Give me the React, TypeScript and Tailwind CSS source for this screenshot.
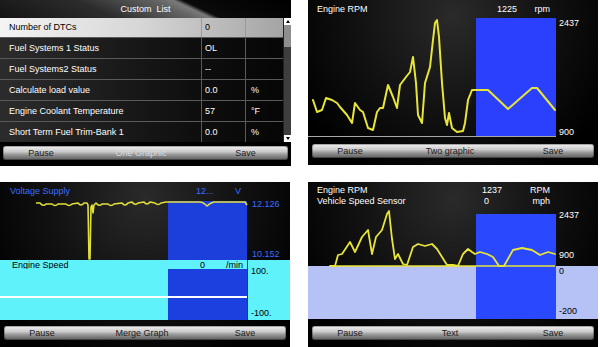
import React from 'react';

const font = "font-['Liberation_Sans',Arial,sans-serif]";

function Btn({ labels, dim }: { labels: string[]; dim?: boolean }) {
  return (
    <div className="grid h-[14px] grid-cols-[76px_124px_1fr] items-center rounded-[3px] bg-[linear-gradient(to_bottom,#f2f2f2,#cacaca_40%,#979797_62%,#5c5c5c)] text-[9px] leading-[11px] text-[#1b1b1b] shadow-[inset_0_0_0_1px_rgba(0,0,0,0.3)]">
      <span className="text-center">{labels[0]}</span>
      <span className={dim ? 'text-center text-[#d9d9d9]' : 'text-center'}>{labels[1]}</span>
      <span className="text-center">{labels[2]}</span>
    </div>
  );
}

const rows = [
  ['Number of DTCs', '0', ''],
  ['Fuel Systems 1 Status', 'OL', ''],
  ['Fuel Systems2 Status', '--', ''],
  ['Calculate load value', '0.0', '%'],
  ['Engine Coolant Temperature', '57', '°F'],
  ['Short Term Fuel Trim-Bank 1', '0.0', '%'],
];

function CustomList() {
  return (
    <div className="flex h-[166px] w-[291px] flex-col bg-black text-white">
      <div className="flex h-[18px] items-center justify-center whitespace-pre bg-[linear-gradient(25deg,#141414_0%,#2c2c2c_35%,#626262_58%,#7a7a7a_64%,#0a0a0a_67%,#000_100%)]">
        Custom  List
      </div>
      <div className="flex">
        <div className="w-[283px]">
          {rows.map((r, i) => (
            <div
              key={r[0]}
              className={
                i === 0
                  ? 'grid h-[19px] grid-cols-[201px_44px_1fr] items-center bg-[linear-gradient(to_right,#f4f4f4,#d6d6d6_50%,#a4a4a4)] text-black'
                  : 'grid h-[21px] grid-cols-[201px_44px_1fr] items-center border-t border-[#5a5a5a] bg-[linear-gradient(to_right,#2c2c2c,#0e0e0e_70%,#060606)]'
              }
            >
              <span className="pl-[9px]">{r[0]}</span>
              <span className={i === 0 ? 'flex h-full items-center border-l border-[#9a9a9a] pl-[3px]' : 'flex h-full items-center border-l border-[#5a5a5a] pl-[3px]'}>{r[1]}</span>
              <span className={i === 0 ? 'flex h-full items-center border-l border-[#9a9a9a] pl-[5px]' : 'flex h-full items-center border-l border-[#5a5a5a] pl-[5px]'}>{r[2]}</span>
            </div>
          ))}
        </div>
        <div className="flex w-[8px] flex-col border-l border-[#222] bg-[#3e3e3e]">
          <div className="flex h-[7px] items-center justify-center bg-white">
            <div className="border-x-[2px] border-b-[3px] border-x-transparent border-b-black" />
          </div>
          <div className="h-[22px] bg-[#8e8e8e]" />
          <div className="flex-1" />
          <div className="flex h-[7px] items-center justify-center bg-white">
            <div className="border-x-[2px] border-t-[3px] border-x-transparent border-t-black" />
          </div>
        </div>
      </div>
      <div className="flex-1 px-[3px] pt-[4px]">
        <Btn labels={['Pause', 'One Graphic', 'Save']} dim />
      </div>
    </div>
  );
}

const panelBg = 'bg-[radial-gradient(ellipse_at_50%_10%,#2a2a2a_0%,#121212_45%,#000_85%)]';

function TwoGraphic() {
  return (
    <div className={'flex h-[165px] w-[290px] flex-col text-white ' + panelBg}>
      <div className="flex h-[18px] items-center pl-[9px]">
        <span className="w-[180px]">Engine RPM</span>
        <span className="w-[37px]">1225</span>
        <span className="w-[16px] text-right">rpm</span>
      </div>
      <div className="flex h-[120px]">
        <svg width="248" height="120" viewBox="0 0 248 120" className="shrink-0">
          <rect x="168" y="0" width="80" height="119" fill="#2b40fc" />
          <line x1="0" y1="118.5" x2="248" y2="118.5" stroke="#a8a8a8" strokeWidth="1" />
          <polyline
            fill="none"
            stroke="#e8e537"
            strokeWidth="2"
            strokeLinejoin="round"
            strokeLinecap="round"
            points="5,82 9,94 14,92 18,80 24,82 29,85 32,89 39,97 44,105 47,85 52,92 55,94 60,110 65,112 69,94 72,90 75,90 80,67 85,79 89,90 92,67 98,59 102,54 105,39 108,65 110,97 114,105 117,65 122,49 125,22 127,5 129,2 131,19 134,65 137,100 139,107 141,95 144,110 149,114 155,113 157,105 160,82 164,72 180,72 200,91 224,70 229,70 247,92"
          />
        </svg>
        <div className="flex flex-1 flex-col justify-between pl-[3px]">
          <span>2437</span>
          <span>900</span>
        </div>
      </div>
      <div className="flex-1 px-[4px] pt-[6px]">
        <Btn labels={['Pause', 'Two graphic', 'Save']} />
      </div>
    </div>
  );
}

function MergeGraph() {
  return (
    <div className={'flex h-[165px] w-[290px] flex-col text-white ' + panelBg}>
      <div className="flex h-[17px] pl-[10px] pt-[4px] text-[#3c6cff]">
        <span className="w-[186px]">Voltage Supply</span>
        <span className="w-[39px]">12...</span>
        <span>V</span>
      </div>
      <div className="flex h-[61px]">
        <svg width="248" height="61" viewBox="0 0 248 61" className="shrink-0">
          <rect x="168" y="2" width="79" height="59" fill="#1c3fdc" />
          <path
            fill="none"
            stroke="#e2df3a"
            strokeWidth="1.6"
            strokeLinejoin="round"
            d="M36,4 L40,4 Q43,8 46,5 L52,5 Q55,8 58,5 L66,5 Q69,8 72,5 L78,4 Q81,8 84,4 L87,4 L88,6 L89,60 L90,60 L91,8 L92,6 L93,14 L94,6 L96,4 Q99,8 102,5 L108,5 Q111,8 114,5 L122,4 Q125,8 128,4 L132,3 Q135,7 138,4 L144,3 Q147,7 150,3 L155,4 Q158,7 161,4 L166,3 L200,3 Q203,3 207,7 Q210,4 214,3 L245,3 L247,6"
          />
        </svg>
        <div className="flex flex-1 flex-col justify-between pl-[4px] text-[#3c6cff]">
          <span>12.126</span>
          <span>10.152</span>
        </div>
      </div>
      <div className="flex h-[60px] bg-[#60f2fb] text-black">
        <div className="flex w-[247px] flex-col">
          <div className="flex h-[9px] pl-[12px]">
            <span className="w-[188px]">Engine Speed</span>
            <span className="w-[26px]">0</span>
            <span>/min</span>
          </div>
          <div className="h-[51px] bg-[linear-gradient(to_right,#60f2fb_168px,#1c3fe0_168px)] pt-[27px]">
            <div className="h-[2px] bg-white" />
          </div>
        </div>
        <div className="flex flex-1 flex-col border-l border-[#1a34b8] pl-[3px] pt-[6px]">
          <span>100.</span>
          <span className="mt-[31px]">-100.</span>
        </div>
      </div>
      <div className="flex-1 px-[4px] pt-[6px]">
        <Btn labels={['Pause', 'Merge Graph', 'Save']} />
      </div>
    </div>
  );
}

function TextGraph() {
  return (
    <div className={'flex h-[165px] w-[290px] flex-col text-white ' + panelBg}>
      <div className="flex h-[28px] pl-[9px] pt-[3px]">
        <div className="w-[165px]">
          <div>Engine RPM</div>
          <div>Vehicle Speed Sensor</div>
        </div>
        <div className="w-[30px]">
          <div>1237</div>
          <div className="pl-[2px]">0</div>
        </div>
        <div className="w-[38px] text-right">
          <div>RPM</div>
          <div>mph</div>
        </div>
      </div>
      <div className="flex h-[109px]">
        <svg width="248" height="109" viewBox="0 0 248 109" className="shrink-0">
          <rect x="0" y="56" width="248" height="53" fill="#b6c2f6" />
          <rect x="168" y="4" width="80" height="105" fill="#2a48fd" />
          <line x1="22" y1="56" x2="247" y2="56" stroke="#e8e537" strokeWidth="1.6" />
          <polyline
            fill="none"
            stroke="#e8e537"
            strokeWidth="1.8"
            strokeLinejoin="round"
            strokeLinecap="round"
            points="22,56 27,56 30,45 34,44 42,32 47,42 54,27 60,20 64,44 68,27 74,20 79,4 81,1 84,29 87,49 90,44 95,54 99,55 105,37 110,34 117,36 124,34 129,39 139,55 145,55 150,56 155,44 160,39 164,42 167,44 172,42 179,44 185,47 191,56 196,56 205,40 214,38 224,40 232,45 240,42 247,44"
          />
        </svg>
        <div className="flex flex-1 flex-col bg-[linear-gradient(to_bottom,transparent_56px,#b6c2f6_56px)] pl-[3px]">
          <span>2437</span>
          <span className="mt-[29px]">900</span>
          <span className="mt-[5px] text-black">0</span>
          <span className="mt-[29px] text-black">-200</span>
        </div>
      </div>
      <div className="flex-1 px-[4px] pt-[7px]">
        <Btn labels={['Pause', 'Text', 'Save']} />
      </div>
    </div>
  );
}

export default function App() {
  return (
    <div className={'h-[347px] w-[600px] overflow-hidden bg-white text-[9px] leading-[11px] ' + font}>
      <div className="grid grid-cols-[291px_290px] grid-rows-[166px_165px] gap-x-[17px] gap-y-[16px]">
        <CustomList />
        <div className="self-start">
          <TwoGraphic />
        </div>
        <MergeGraph />
        <TextGraph />
      </div>
    </div>
  );
}
